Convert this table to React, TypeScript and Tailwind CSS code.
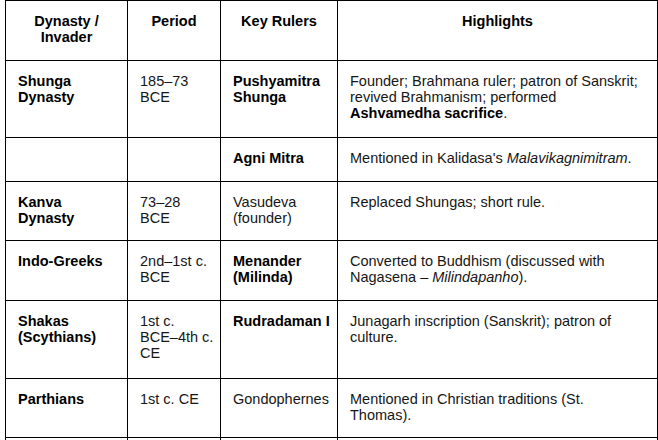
const cell = "border border-black align-top px-3 pt-3 pb-0";

type Row = {
  h: string;
  dyn: React.ReactNode;
  period: React.ReactNode;
  ruler: React.ReactNode;
  rulerBold?: boolean;
  high: React.ReactNode;
};

const rows: Row[] = [
  {
    h: "h-[77px]",
    dyn: <>Shunga<br />Dynasty</>,
    period: <>185–73<br />BCE</>,
    ruler: <>Pushyamitra<br />Shunga</>,
    rulerBold: true,
    high: (
      <>
        Founder; Brahmana ruler; patron of Sanskrit;
        <br />
        revived Brahmanism; performed
        <br />
        <b className="text-black">Ashvamedha sacrifice</b>.
      </>
    ),
  },
  {
    h: "h-[44px]",
    dyn: "",
    period: "",
    ruler: "Agni Mitra",
    rulerBold: true,
    high: (
      <>
        Mentioned in Kalidasa's <i>Malavikagnimitram</i>.
      </>
    ),
  },
  {
    h: "h-[59px]",
    dyn: <>Kanva<br />Dynasty</>,
    period: <>73–28<br />BCE</>,
    ruler: <>Vasudeva<br />(founder)</>,
    high: "Replaced Shungas; short rule.",
  },
  {
    h: "h-[60px]",
    dyn: "Indo-Greeks",
    period: <>2nd–1st c.<br />BCE</>,
    ruler: <>Menander<br />(Milinda)</>,
    rulerBold: true,
    high: (
      <>
        Converted to Buddhism (discussed with
        <br />
        Nagasena – <i>Milindapanho</i>).
      </>
    ),
  },
  {
    h: "h-[78px]",
    dyn: <>Shakas<br />(Scythians)</>,
    period: (
      <>
        1st c.<br />
        <span className="whitespace-nowrap">BCE–4th c.</span>
        <br />
        CE
      </>
    ),
    ruler: <span className="whitespace-nowrap">Rudradaman I</span>,
    rulerBold: true,
    high: (
      <>
        Junagarh inscription (Sanskrit); patron of
        <br />
        culture.
      </>
    ),
  },
  {
    h: "h-[59px]",
    dyn: "Parthians",
    period: "1st c. CE",
    ruler: "Gondophernes",
    high: (
      <>
        Mentioned in Christian traditions (St.
        <br />
        Thomas).
      </>
    ),
  },
  {
    h: "h-[59px]",
    dyn: "",
    period: "",
    ruler: "",
    high: "",
  },
];

export default function App() {
  return (
    <div
      className="h-[440px] w-[658px] overflow-hidden bg-white pl-[5px] text-[14.5px] leading-[16px] text-[#161616]"
      style={{ fontFamily: '"Liberation Sans", Arial, sans-serif' }}
    >
      <table className="w-[652px] table-fixed border-collapse">
        <colgroup>
          <col className="w-[122px]" />
          <col className="w-[93px]" />
          <col className="w-[117px]" />
          <col className="w-[320px]" />
        </colgroup>
        <thead>
          <tr className="h-[60px]">
            <th className={cell + " text-center font-bold text-black"}>
              Dynasty /<br />Invader
            </th>
            <th className={cell + " text-center font-bold text-black"}>Period</th>
            <th className={cell + " text-center font-bold text-black"}>Key Rulers</th>
            <th className={cell + " text-center font-bold text-black"}>Highlights</th>
          </tr>
        </thead>
        <tbody>
          {rows.map((r, i) => (
            <tr key={i} className={r.h}>
              <td className={cell + " text-left font-bold text-black"}>{r.dyn}</td>
              <td className={cell + " text-left"}>{r.period}</td>
              <td className={cell + " text-left" + (r.rulerBold ? " font-bold text-black" : "")}>
                {r.ruler}
              </td>
              <td className={cell + " text-left"}>{r.high}</td>
            </tr>
          ))}
        </tbody>
      </table>
    </div>
  );
}
